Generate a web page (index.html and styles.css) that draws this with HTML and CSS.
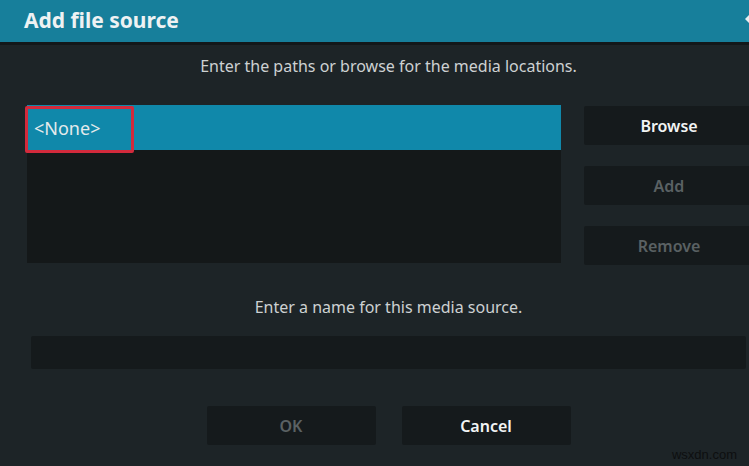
FILE: index.html
```html
<!DOCTYPE html>
<html>
<head>
<meta charset="utf-8">
<link rel="stylesheet" href="styles.css">
</head>
<body>
<div class="dialog">
  <header class="topbar">
    <h1 class="title">Add file source</h1>
    <svg class="logo" width="16" height="34" viewBox="0 0 16 34">
      <polygon points="0,14 6,8 6,20" fill="#e8eef0"/>
      <polygon points="8,2 16,-6 16,18 8,26" fill="#e8eef0"/>
      <polygon points="8,28 16,20 16,34 8,34" fill="#e8eef0"/>
    </svg>
  </header>
  <div class="topbar-edge"></div>

  <p class="hint hint-top">Enter the paths or browse for the media locations.</p>

  <div class="paths">
    <div class="list">
      <div class="row selected">&lt;None&gt;</div>
      <div class="mark"></div>
    </div>
    <div class="side">
      <div class="btn active">Browse</div>
      <div class="btn">Add</div>
      <div class="btn">Remove</div>
    </div>
  </div>

  <p class="hint hint-name">Enter a name for this media source.</p>
  <div class="field"></div>

  <div class="actions">
    <div class="btn wide">OK</div>
    <div class="btn wide active">Cancel</div>
  </div>
</div>
<div class="watermark">wsxdn.com</div>
</body>
</html>
```

FILE: styles.css
```css
html, body {
  margin: 0;
  padding: 0;
}
body {
  width: 749px;
  height: 466px;
  overflow: hidden;
  background: #1d2427;
  font-family: "Noto Sans", "Open Sans", sans-serif;
  position: relative;
}
.dialog {
  width: 777px;
  display: flex;
  flex-direction: column;
}
.topbar {
  height: 42px;
  background: #177f9b;
  display: flex;
  align-items: center;
  justify-content: space-between;
  padding-left: 24px;
}
.title {
  margin: 0;
  font-size: 21px;
  font-weight: 700;
  color: #eef2f3;
  line-height: 1;
  padding-bottom: 2px;
}
.logo {
  margin-right: 16px;
  margin-top: 2px;
}
.topbar-edge {
  height: 3px;
  background: #13181a;
}
.hint {
  margin: 0;
  text-align: center;
  color: #cdd1d2;
  font-size: 16px;
  line-height: 20px;
}
.hint-top {
  margin-top: 11px;
}
.paths {
  display: flex;
  gap: 23px;
  margin-top: 29px;
  padding-left: 27px;
}
.list {
  width: 534px;
  height: 158px;
  background: #141819;
  position: relative;
}
.row {
  height: 45px;
  display: flex;
  align-items: center;
  padding-left: 7px;
  font-size: 18px;
  color: #e4eaec;
}
.row.selected {
  background: #1088aa;
}
.mark {
  position: absolute;
  left: -2px;
  top: 1px;
  width: 103px;
  height: 41px;
  border: 3px solid #d32a3c;
  border-radius: 2px;
}
.side {
  display: flex;
  flex-direction: column;
  gap: 21px;
  padding-top: 1px;
}
.btn {
  width: 170px;
  height: 39px;
  background: #151a1c;
  border-radius: 2px;
  display: flex;
  align-items: center;
  justify-content: center;
  font-size: 16px;
  font-weight: 600;
  color: #5a6163;
}
.btn.active {
  color: #f2f4f4;
}
.hint-name {
  margin-top: 32px;
}
.field {
  margin: 19px 31px 0;
  height: 33px;
  background: #151a1c;
  border-radius: 2px;
}
.actions {
  display: flex;
  justify-content: center;
  gap: 26px;
  margin-top: 37px;
}
.btn.wide {
  width: 169px;
}
.watermark {
  position: absolute;
  right: 12px;
  bottom: 4px;
  font-family: "Liberation Sans", sans-serif;
  font-size: 13px;
  color: #0d0f10;
}
```
